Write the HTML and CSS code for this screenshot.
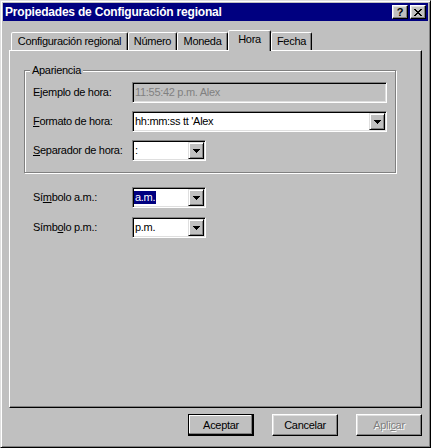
FILE: index.html
```html
<!DOCTYPE html>
<html lang="es">
<head>
<meta charset="utf-8">
<title>Propiedades de Configuración regional</title>
<link rel="stylesheet" href="styles.css">
</head>
<body>
<div class="window">
  <div class="titlebar">
    <span class="title">Propiedades de Configuración regional</span>
    <div class="title-btns">
      <div class="tbtn"><span class="q">?</span></div>
      <div class="tbtn">
        <svg width="8" height="7" viewBox="0 0 8 7" shape-rendering="crispEdges">
          <path d="M0 0h2v1H0zM6 0h2v1H6zM1 1h2v1H1zM5 1h2v1H5zM2 2h4v1H2zM3 3h2v1H3zM2 4h4v1H2zM1 5h2v1H1zM5 5h2v1H5zM0 6h2v1H0zM6 6h2v1H6z" fill="#000"/>
        </svg>
      </div>
    </div>
  </div>

  <div class="tabs">
    <div class="tab t1">Configuración regional</div>
    <div class="tab t2">Número</div>
    <div class="tab t3">Moneda</div>
    <div class="tab t4 active">Hora</div>
    <div class="tab t5">Fecha</div>
  </div>

  <div class="panel">
    <div class="group">
      <span class="legend">Apariencia</span>
      <div class="row">
        <span class="lbl">E<u>j</u>emplo de hora:</span>
        <div class="field wide disabled"><span class="val">11:55:42 p.m. Alex</span></div>
      </div>
      <div class="row">
        <span class="lbl"><u>F</u>ormato de hora:</span>
        <div class="field wide"><span class="val">hh:mm:ss tt 'Alex</span><div class="dd"><svg width="7" height="4" viewBox="0 0 7 4" shape-rendering="crispEdges"><path d="M0 0h7v1H0zM1 1h5v1H1zM2 2h3v1H2zM3 3h1v1H3z" fill="#000"/></svg></div></div>
      </div>
      <div class="row">
        <span class="lbl"><u>S</u>eparador de hora:</span>
        <div class="field small"><span class="val">:</span><div class="dd"><svg width="7" height="4" viewBox="0 0 7 4" shape-rendering="crispEdges"><path d="M0 0h7v1H0zM1 1h5v1H1zM2 2h3v1H2zM3 3h1v1H3z" fill="#000"/></svg></div></div>
      </div>
    </div>

    <div class="syms">
      <div class="row">
        <span class="lbl">Sí<u>m</u>bolo a.m.:</span>
        <div class="field small"><span class="val"><span class="sel">a.m.</span></span><div class="dd"><svg width="7" height="4" viewBox="0 0 7 4" shape-rendering="crispEdges"><path d="M0 0h7v1H0zM1 1h5v1H1zM2 2h3v1H2zM3 3h1v1H3z" fill="#000"/></svg></div></div>
      </div>
      <div class="row">
        <span class="lbl">Símb<u>o</u>lo p.m.:</span>
        <div class="field small"><span class="val">p.m.</span><div class="dd"><svg width="7" height="4" viewBox="0 0 7 4" shape-rendering="crispEdges"><path d="M0 0h7v1H0zM1 1h5v1H1zM2 2h3v1H2zM3 3h1v1H3z" fill="#000"/></svg></div></div>
      </div>
    </div>
  </div>

  <div class="buttons">
    <div class="btn default">Aceptar</div>
    <div class="btn">Cancelar</div>
    <div class="btn disabled">Apli<u>c</u>ar</div>
  </div>
</div>
</body>
</html>
```

FILE: styles.css
```css
html, body {
  margin: 0;
  padding: 0;
  background: #c0c0c0;
}

body {
  font-family: "Liberation Sans", Arial, sans-serif;
  font-size: 11px;
  letter-spacing: -0.3px;
  color: #000;
  line-height: 13px;
}

.window {
  width: 431px;
  height: 448px;
  box-sizing: border-box;
  border: 1px solid;
  border-color: #dfdfdf #000 #000 #dfdfdf;
  box-shadow: inset 1px 1px #fff, inset -1px -1px #808080;
  padding: 2px;
  display: flex;
  flex-direction: column;
  background: #c0c0c0;
}

/* Title bar */
.titlebar {
  height: 18px;
  flex: none;
  background: #000080;
  color: #fff;
  display: flex;
  align-items: center;
  justify-content: space-between;
  padding: 0 2px;
}

.title {
  font-weight: bold;
  font-size: 12px;
  letter-spacing: -0.2px;
}

.title-btns {
  display: flex;
  gap: 2px;
}

.tbtn {
  width: 16px;
  height: 14px;
  box-sizing: border-box;
  background: #c0c0c0;
  border: 1px solid;
  border-color: #fff #000 #000 #fff;
  box-shadow: inset -1px -1px #808080, inset 1px 1px #dfdfdf;
  display: flex;
  align-items: center;
  justify-content: center;
  color: #000;
}

.q {
  font-weight: bold;
  font-size: 11px;
  letter-spacing: 0;
  line-height: 10px;
}

/* Tabs */
.tabs {
  display: flex;
  align-items: flex-end;
  height: 20px;
  margin: 9px 0 0 8px;
  position: relative;
  z-index: 1;
  flex: none;
}

.tab {
  height: 18px;
  box-sizing: border-box;
  border: 1px solid;
  border-bottom: none;
  border-color: #fff #000 transparent #fff;
  box-shadow: inset -1px 0 #808080;
  border-radius: 2px 2px 0 0;
  padding-top: 2px;
  text-align: center;
  background: #c0c0c0;
  white-space: nowrap;
}

.t1 { width: 117px; }
.t2 { width: 49px; }
.t3 { width: 51px; }
.t4 { width: 43px; }
.t5 { width: 41px; }

.tab.active {
  height: 21px;
  margin-bottom: -1px;
}

/* Panel */
.panel {
  margin: 0 6px;
  height: 358px;
  flex: none;
  box-sizing: border-box;
  border: 1px solid;
  border-color: #fff #000 #000 #fff;
  box-shadow: inset -1px -1px #808080;
}

.group {
  position: relative;
  margin: 19px 0 0 14px;
  width: 372px;
  height: 103px;
  box-sizing: border-box;
  border: 1px solid #808080;
  box-shadow: 1px 1px #fff, inset 1px 1px #fff;
  padding: 11px 0 0 8px;
  display: flex;
  flex-direction: column;
  gap: 8px;
}

.legend {
  position: absolute;
  top: -7px;
  left: 5px;
  padding: 0 2px;
  background: #c0c0c0;
}

.syms {
  margin: 14px 0 0 23px;
  display: flex;
  flex-direction: column;
  gap: 9px;
}

.row {
  display: flex;
  align-items: center;
  height: 21px;
}

.lbl {
  width: 99px;
  flex: none;
  white-space: nowrap;
}

.field {
  height: 21px;
  box-sizing: border-box;
  border: 1px solid;
  border-color: #808080 #fff #fff #808080;
  box-shadow: inset 1px 1px #000, inset -1px -1px #dfdfdf;
  background: #fff;
  padding: 1px;
  display: flex;
  align-items: center;
}

.field.wide { width: 255px; }
.field.small { width: 74px; }

.field.disabled {
  background: #c0c0c0;
  color: #808080;
}

.val {
  flex: 1;
  padding-left: 1px;
  white-space: nowrap;
  overflow: hidden;
}

.sel {
  display: inline-block;
  background: #000080;
  color: #fff;
  padding: 0 1px;
  margin-left: -1px;
}

.dd {
  width: 16px;
  height: 17px;
  flex: none;
  box-sizing: border-box;
  border: 1px solid;
  border-color: #dfdfdf #000 #000 #dfdfdf;
  box-shadow: inset 1px 1px #fff, inset -1px -1px #808080;
  background: #c0c0c0;
  display: flex;
  align-items: center;
  justify-content: center;
}

/* Buttons */
.buttons {
  display: flex;
  justify-content: flex-end;
  gap: 18px;
  margin: 6px 6px 0 0;
  flex: none;
}

.btn {
  width: 66px;
  height: 22px;
  box-sizing: border-box;
  border: 1px solid;
  border-color: #fff #000 #000 #fff;
  box-shadow: inset -1px -1px #808080, inset 1px 1px #dfdfdf;
  display: flex;
  align-items: center;
  justify-content: center;
}

.btn.default {
  border-color: #000;
  box-shadow: inset -1px -1px #000, inset -2px -2px #808080, inset 1px 1px #fff;
}

.btn.disabled {
  color: #808080;
  text-shadow: 1px 1px #fff;
}
```
